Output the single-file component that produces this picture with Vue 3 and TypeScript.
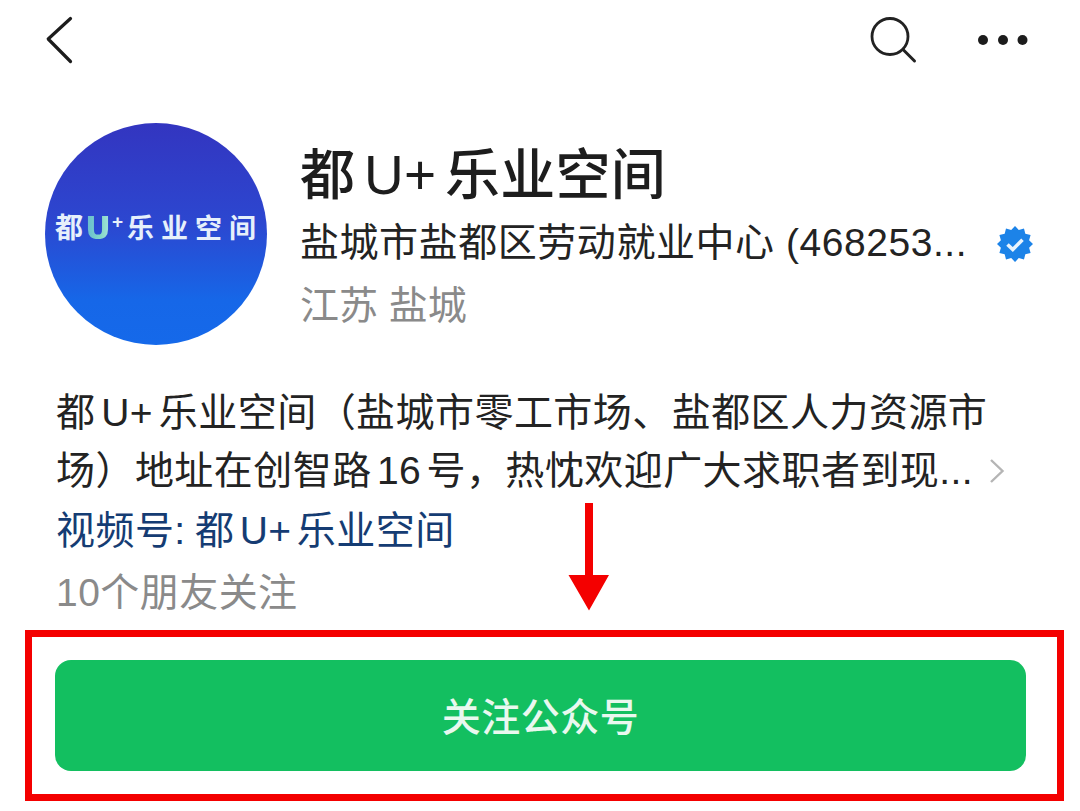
<script setup lang="ts">
const starPoints: string = Array.from({ length: 24 }, (_, i) => {
  const radius = i % 2 === 0 ? 18 : 14.6
  const angle = (Math.PI * i) / 12 - Math.PI / 2
  return `${(18 + radius * Math.cos(angle)).toFixed(2)},${(18 + radius * Math.sin(angle)).toFixed(2)}`
}).join(' ')
</script>

<template>
  <div class="page">
    <header class="topbar">
      <svg class="back" width="30" height="50" viewBox="0 0 30 50">
        <path d="M25.500 2.500 L3.200 23 L25.500 45.500" fill="none" stroke="#1c1c1c" stroke-width="3.200" stroke-linecap="round" stroke-linejoin="round" />
      </svg>
      <div class="actions">
        <svg width="50" height="50" viewBox="0 0 50 50">
          <circle cx="23" cy="20.500" r="18" fill="none" stroke="#222" stroke-width="2.800" />
          <path d="M36.500 34 L47.500 45" stroke="#222" stroke-width="3" stroke-linecap="round" />
        </svg>
        <svg class="dots" width="50" height="12" viewBox="0 0 50 12">
          <circle cx="5" cy="6" r="5" fill="#1c1c1c" />
          <circle cx="25" cy="6" r="5" fill="#1c1c1c" />
          <circle cx="44.500" cy="6" r="5" fill="#1c1c1c" />
        </svg>
      </div>
    </header>

    <section class="profile">
      <div class="avatar">
        <span class="logo-a">都</span>
        <span class="logo-u">U</span>
        <span class="logo-plus">+</span>
        <span class="logo-b">乐业空间</span>
      </div>
      <div class="info">
        <h1 class="title">都 U+ 乐业空间</h1>
        <div class="org">
          <span class="org-name">盐城市盐都区劳动就业中心 (468253...</span>
          <svg class="badge" width="36" height="36" viewBox="0 0 36 36">
            <polygon fill="#1c83e8" :points="starPoints" />
            <path d="M10.500 18.500 L15.800 23.500 L25.500 13.800" fill="none" stroke="#e9f4fd" stroke-width="3.600" />
          </svg>
        </div>
        <div class="place">江苏 盐城</div>
      </div>
    </section>

    <section class="desc">
      <div class="desc-line first">都 U+ 乐业空间（盐城市零工市场、盐都区人力资源市</div>
      <div class="desc-line desc-more">
        <span>场）地址在创智路 16 号，热忱欢迎广大求职者到现...</span>
        <svg width="16" height="26" viewBox="0 0 16 26">
          <path d="M2 2 L13.500 13 L2 24" fill="none" stroke="#b5b5b5" stroke-width="2.400" />
        </svg>
      </div>
      <div class="channel"><span class="channel-label">视频号:</span> 都 U+ 乐业空间</div>
      <div class="friends">10个朋友关注</div>
    </section>

    <button class="follow" type="button">关注公众号</button>

    <div class="mark-box"></div>
    <svg class="mark-arrow" width="44" height="110" viewBox="0 0 44 110">
      <path d="M17 0 H25 V72 H41 L21 107.500 L0.500 72 H17 Z" fill="#f40000" />
    </svg>
  </div>
</template>

<style>
html, body { margin: 0; background: #fff; }
</style>

<style scoped>
.page {
  position: relative;
  width: 1080px;
  height: 811px;
  overflow: hidden;
  background: #fff;
  box-sizing: border-box;
  padding: 16px 52px 0 45px;
  font-family: "Liberation Sans", "Noto Sans CJK SC", sans-serif;
  color: #1f1f1f;
}
.topbar {
  display: flex;
  justify-content: space-between;
  align-items: flex-start;
  height: 107px;
}
.back { display: block; }
.actions {
  display: flex;
  align-items: center;
  gap: 61px;
}
.dots { margin-bottom: 3px; }
.profile {
  display: flex;
  gap: 33px;
  align-items: flex-start;
}
.avatar {
  position: relative;
  flex: none;
  width: 222px;
  height: 222px;
  border-radius: 50%;
  background: linear-gradient(180deg, #3335c0 0%, #2c47d0 45%, #1667e8 80%, #1569ea 100%);
  display: flex;
  align-items: center;
  justify-content: flex-start;
  color: #e6f0fb;
  font-weight: 700;
  padding: 0 0 10px 10px;
  box-sizing: border-box;
}
.logo-a { font-size: 28px; line-height: 30px; font-weight: 700; }
.logo-u {
  font-family: "DejaVu Sans", sans-serif;
  font-size: 32px;
  line-height: 30px;
  font-weight: 700;
  margin-left: 2px;
  margin-top: -2px;
  background: linear-gradient(90deg, #63b8d2, #84d8c6 60%, #a9e3de);
  -webkit-background-clip: text;
  background-clip: text;
  color: transparent;
}
.logo-plus { font-size: 19px; line-height: 30px; align-self: center; margin-bottom: 14px; margin-left: 1px; margin-right: 4px; }
.logo-b { font-size: 27px; line-height: 30px; letter-spacing: 7px; white-space: nowrap; }
.info {
  flex: 1;
  min-width: 0;
  display: flex;
  flex-direction: column;
}
.title {
  margin: 22px 0 0;
  font-size: 55px;
  line-height: 60px;
  font-weight: 500;
  letter-spacing: 0.300px;
  word-spacing: -7px;
  color: #1d1d1d;
  white-space: nowrap;
}
.org {
  display: flex;
  align-items: center;
  justify-content: space-between;
  margin-top: 16px;
  height: 48px;
}
.org-name {
  font-size: 39px;
  line-height: 44px;
  margin-bottom: 5px;
  letter-spacing: 0.550px;
  white-space: nowrap;
  color: #232323;
}
.badge { flex: none; margin-right: -4.500px; margin-left: 20px; margin-bottom: 2px; }
.place {
  margin-top: 15px;
  font-size: 39px;
  line-height: 44px;
  color: #8a8a8a;
}
.desc {
  margin-top: 38px;
  padding-left: 11px;
  font-size: 39px;
  letter-spacing: 0.450px;
  word-spacing: -6px;
}
.desc-line {
  height: 60px;
  line-height: 60px;
  white-space: nowrap;
  color: #232323;
}
.desc-line.first { height: 58px; word-spacing: -5.500px; }
.desc-more {
  display: flex;
  align-items: center;
  gap: 16px;
}
.channel {
  height: 60px;
  line-height: 60px;
  color: #153c73;
  white-space: nowrap;
}
.channel-label { margin-right: 4px; }
.friends {
  height: 60px;
  line-height: 60px;
  margin-top: 2px;
  color: #8a8a8a;
  white-space: nowrap;
}
.follow {
  display: block;
  width: 971px;
  height: 111px;
  margin: 37px 0 0 10px;
  padding: 0 0 4px;
  border: none;
  border-radius: 16px;
  background: #13bf60;
  color: #e9f8ef;
  font-family: inherit;
  font-size: 39px;
  font-weight: 500;
  letter-spacing: 0.500px;
}
.mark-box {
  position: absolute;
  left: 25px;
  top: 630px;
  width: 1039px;
  height: 171px;
  box-sizing: border-box;
  border: 7px solid #f40000;
}
.mark-arrow {
  position: absolute;
  left: 568px;
  top: 503px;
}
</style>
